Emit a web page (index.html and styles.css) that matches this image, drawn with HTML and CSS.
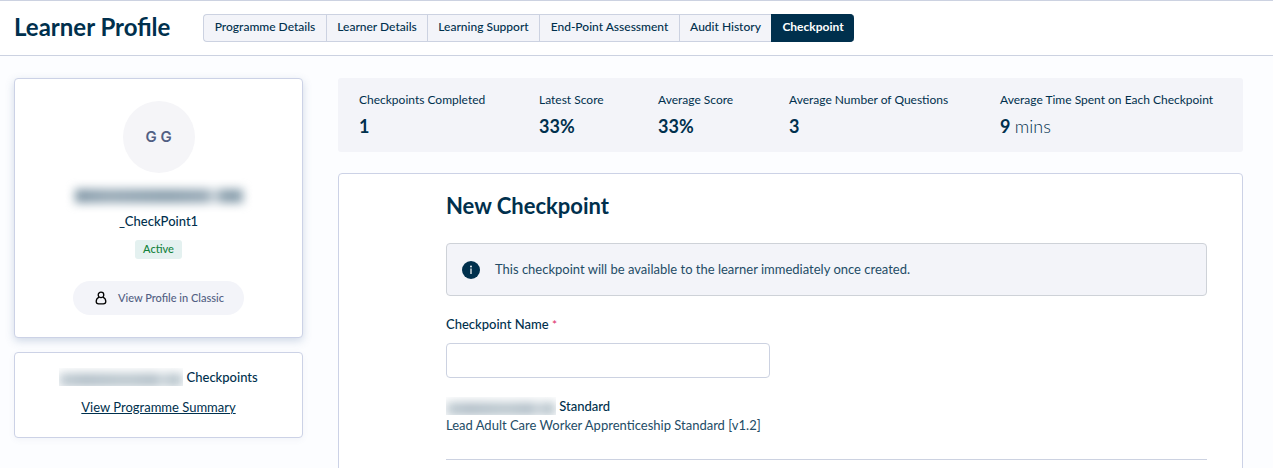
FILE: index.html
```html
<!DOCTYPE html>
<html lang="en">
<head>
  <meta charset="UTF-8">
  <meta name="viewport" content="width=device-width, initial-scale=1.0">
  <title>Learner Profile</title>
  <link rel="stylesheet" href="styles.css">
</head>
<body>
  <header class="page-header">
    <h1>Learner Profile</h1>
    <nav class="tabs">
      <a href="#programme">Programme Details</a>
      <a href="#learner">Learner Details</a>
      <a href="#support">Learning Support</a>
      <a href="#assessment">End-Point Assessment</a>
      <a href="#audit">Audit History</a>
      <a href="#checkpoint" class="active">Checkpoint</a>
    </nav>
  </header>

  <main class="layout">
    <aside class="sidebar">
      <!-- Learner card -->
      <section class="card profile">
        <div class="avatar">G G</div>
        <div class="hidden-name large"></div>
        <p class="profile-sub">_CheckPoint1</p>
        <span class="badge">Active</span>
        <a href="#classic" class="classic-link">
          <svg width="12" height="14" viewBox="0 0 12 14" fill="none" stroke="#000" stroke-width="1.3" stroke-linejoin="round">
            <circle cx="6" cy="3.9" r="2.8"/>
            <path d="M4 6.1C2.2 7 1.2 8.6 1.2 10.6c0 1.5 1 2.3 2.5 2.3h4.6c1.5 0 2.5-.8 2.5-2.3C10.8 8.6 9.8 7 8 6.1"/>
          </svg>
          View Profile in Classic
        </a>
      </section>

      <!-- Programme links -->
      <section class="card summary">
        <p><span class="clip"><span class="hidden-name"></span></span> Checkpoints</p>
        <a href="#summary">View Programme Summary</a>
      </section>
    </aside>

    <div class="content">
      <dl class="stats">
        <div><dt>Checkpoints Completed</dt><dd>1</dd></div>
        <div><dt>Latest Score</dt><dd>33%</dd></div>
        <div><dt>Average Score</dt><dd>33%</dd></div>
        <div><dt>Average Number of Questions</dt><dd>3</dd></div>
        <div><dt>Average Time Spent on Each Checkpoint</dt><dd>9 <span>mins</span></dd></div>
      </dl>

      <form class="card checkpoint-form">
        <h2>New Checkpoint</h2>
        <div class="notice">
          <svg width="18" height="18" viewBox="0 0 18 18">
            <circle cx="9" cy="9" r="9" fill="#00304d"/>
            <circle cx="9" cy="5.5" r="0.9" fill="#fff"/>
            <rect x="8.4" y="7.5" width="1.2" height="5.5" fill="#fff"/>
          </svg>
          <p>This checkpoint will be available to the learner immediately once created.</p>
        </div>
        <label for="checkpoint-name">Checkpoint Name <span class="required">*</span></label>
        <input type="text" id="checkpoint-name">
        <p class="standard-title"><span class="clip"><span class="hidden-name"></span></span> Standard</p>
        <p class="standard-name">Lead Adult Care Worker Apprenticeship Standard [v1.2]</p>
        <hr>
      </form>
    </div>
  </main>
</body>
</html>
```

FILE: styles.css
```css
* {
  box-sizing: border-box;
}

body {
  margin: 0;
  background: #fcfdff;
  color: #00304d;
  font-family: Lato, sans-serif;
  font-size: 13px;
  line-height: 19px;
}

h1, h2, p, dl, dd {
  margin: 0;
}

a {
  color: inherit;
}

.page-header {
  display: flex;
  align-items: center;
  height: 56px;
  padding: 0 14px;
  background: #fff;
  border-top: 1px solid #ccd2e1;
  border-bottom: 1px solid #ccd2e1;
}

.page-header h1 {
  min-width: 189px;
  padding-bottom: 2px;
  font-size: 24px;
  line-height: 28px;
}

.tabs {
  display: grid;
  grid-template-columns: 123fr 101fr 112fr 140fr 92fr 83fr;
  width: 651px;
}

.tabs a {
  padding: 3px 0 5px;
  background: #f3f4f9;
  border: 1px solid #ccd2e1;
  border-right: 0;
  font-size: 12px;
  font-weight: 500;
  line-height: 18px;
  text-align: center;
  text-decoration: none;
  white-space: nowrap;
}

.tabs a:first-child {
  border-radius: 4px 0 0 4px;
}

.tabs a.active {
  background: #00304d;
  border-color: #00304d;
  border-radius: 0 4px 4px 0;
  color: #fff;
  font-weight: 700;
}

.layout {
  display: flex;
  gap: 35px;
  padding: 22px 30px 0 14px;
}

.sidebar {
  flex: 0 0 289px;
}

.content {
  flex: 1;
  min-width: 0;
}

.card {
  background: #fff;
  border: 1px solid #ccd2e6;
  border-radius: 4px;
}

.profile {
  display: flex;
  flex-direction: column;
  align-items: center;
  padding: 22px 20px;
  box-shadow: 0 3px 8px rgba(80, 110, 160, 0.25);
}

.avatar {
  width: 72px;
  height: 72px;
  border-radius: 50%;
  background: #f5f5f8;
  color: #525f83;
  font-family: Inter, sans-serif;
  font-size: 15px;
  font-weight: 600;
  line-height: 72px;
  text-align: center;
}

/* Learner names are blurred out */
.hidden-name {
  display: block;
  width: 124px;
  height: 14px;
  background: linear-gradient(90deg, #c3ced5, #b3c0c9 20%, #bdc9d0 55%, #b3c0c9 78%, #d5dde2 83%, #bdc9d0 88%);
  filter: blur(5px);
}

.hidden-name.large {
  width: 168px;
  margin: 16px 0 9px;
  background: linear-gradient(90deg, #8399a8, #97a9b6 20%, #8ba0ae 55%, #97a9b6 78%, #d5dde2 83%, #8ba0ae 88%);
}

.clip {
  display: inline-block;
  height: 18px;
  margin-bottom: 1px;
  padding-top: 5px;
  overflow: hidden;
  vertical-align: bottom;
}

.profile-sub {
  font-weight: 500;
}

.badge {
  margin-top: 9px;
  padding: 0 8px 1px;
  background: #e4f1f0;
  border-radius: 3px;
  color: #12813b;
  font-size: 11px;
  font-weight: 500;
  line-height: 18px;
}

.classic-link {
  display: flex;
  align-items: center;
  gap: 11px;
  margin-top: 22px;
  padding: 8px 20px 8px 22px;
  background: #f3f4f9;
  border-radius: 17px;
  color: #525f83;
  font-size: 11px;
  font-weight: 500;
  line-height: 18px;
  text-decoration: none;
}

.summary {
  margin-top: 14px;
  padding: 15px 20px 20px;
  font-weight: 500;
  text-align: center;
  box-shadow: 0 2px 6px rgba(80, 110, 160, 0.06);
}

.summary a {
  display: inline-block;
  margin-top: 11px;
  font-weight: 400;
}

.stats {
  display: grid;
  grid-template-columns: 180fr 119fr 131fr 211fr 222fr;
  padding: 12px 21px 13px;
  background: #f3f4f9;
  border-radius: 3px;
}

.stats dt {
  font-size: 12px;
  line-height: 20px;
}

.stats dd {
  margin-top: 3px;
  font-size: 18px;
  font-weight: 700;
  line-height: 26px;
}

.stats dd span {
  font-weight: 300;
}

.checkpoint-form {
  margin-top: 21px;
  padding: 18px 35px 16px 107px;
}

.checkpoint-form h2 {
  font-size: 22px;
  line-height: 28px;
}

.notice {
  display: flex;
  align-items: center;
  gap: 15px;
  margin-top: 23px;
  padding: 16px 15px;
  background: #f3f4f9;
  border: 1px solid #ced2d8;
  border-radius: 4px;
}

.notice p,
.standard-name {
  color: #234c66;
}

.checkpoint-form label {
  display: block;
  margin-top: 19px;
  font-weight: 500;
}

.required {
  color: #e0326e;
  font-size: 12px;
}

.checkpoint-form input {
  display: block;
  width: 324px;
  max-width: 100%;
  height: 35px;
  margin-top: 9px;
  padding: 0 10px;
  background: #fff;
  border: 1px solid #ccd2e1;
  border-radius: 4px;
  color: inherit;
  font: inherit;
}

.standard-title {
  margin-top: 19px;
  font-weight: 500;
}

.standard-title .hidden-name {
  width: 110px;
}

.checkpoint-form hr {
  height: 1px;
  margin: 24px 0 0;
  background: #ccd2e1;
  border: 0;
}
```
